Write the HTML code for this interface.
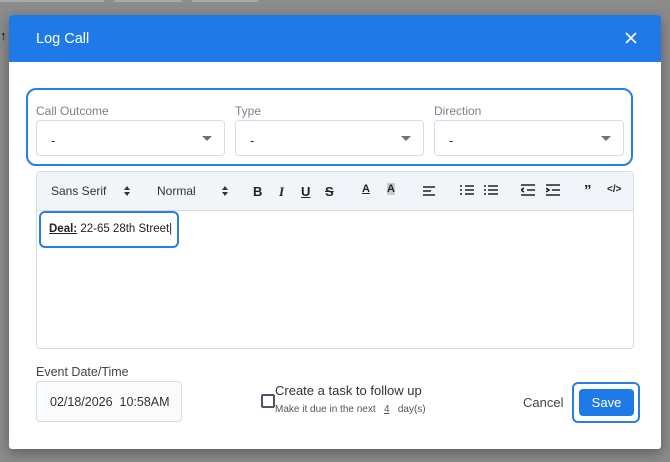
<!DOCTYPE html>
<html><head><style>
*{box-sizing:border-box;margin:0;padding:0}
body{width:670px;height:462px;background:#8c8c8c;font-family:"Liberation Sans",sans-serif;position:relative;overflow:hidden}
.a{position:absolute}
.modal{left:9px;top:15px;width:652px;height:434px;background:#fff;border-radius:3px;box-shadow:0 4px 14px rgba(0,0,0,.35)}
.hdr{left:9px;top:15px;width:652px;height:47px;background:#1f7ae8;border-radius:3px 3px 0 0;color:#fff;font-size:14.5px}
.lbl{font-size:12px;color:#7b8190}
.sel{height:36px;border:1px solid #d7dde6;border-radius:4px;background:#fff}
.sel span{position:absolute;left:14px;top:12px;font-size:13px;color:#333}
.sel i{position:absolute;right:12px;top:15px;border-left:5px solid transparent;border-right:5px solid transparent;border-top:5px solid #6b7280}
.tb{font-size:12px;color:#333}
.ic{font-size:13px;font-weight:bold;color:#222}
svg.s{position:absolute;stroke:#222;stroke-width:1.6;fill:none}
</style></head><body>
<div class="a" style="left:0;top:0;width:104px;height:2px;background:#aaa"></div>
<div class="a" style="left:114px;top:0;width:68px;height:2px;background:#aaa"></div>
<div class="a" style="left:192px;top:0;width:66px;height:2px;background:#aaa"></div>
<div class="a" style="left:0;top:28px;font-size:13px;color:#111">↑</div>
<div class="a modal"></div>
<div class="a hdr"><span class="a" style="left:27px;top:16px">Log Call</span>
<svg class="a" style="left:616px;top:17px" width="12" height="12" viewBox="0 0 12 12"><path d="M1 1L11 11M11 1L1 11" stroke="#fff" stroke-width="1.6"/></svg></div>
<div class="a" style="left:26px;top:88px;width:607px;height:78px;border:2px solid #2a7de6;border-radius:10px"></div>
<div class="a lbl" style="left:36px;top:104px">Call Outcome</div>
<div class="a lbl" style="left:235px;top:104px">Type</div>
<div class="a lbl" style="left:434px;top:104px">Direction</div>
<div class="a sel" style="left:36px;top:120px;width:189px"><span>-</span><i></i></div>
<div class="a sel" style="left:235px;top:120px;width:189px"><span>-</span><i></i></div>
<div class="a sel" style="left:434px;top:120px;width:190px"><span>-</span><i></i></div>
<div class="a" style="left:36px;top:171px;width:598px;height:178px;border:1px solid #d7dde6;border-radius:4px;background:#fff"></div>
<div class="a" style="left:37px;top:172px;width:596px;height:39px;background:#f1f4f8;border-bottom:1px solid #d7dde6;border-radius:4px 4px 0 0"></div>
<div class="a tb" style="left:51px;top:184px">Sans Serif</div>
<svg class="a" style="left:124px;top:186px" width="6" height="10"><path d="M0 4L3 0L6 4ZM0 6L3 10L6 6Z" fill="#333"/></svg>
<div class="a tb" style="left:157px;top:184px">Normal</div>
<svg class="a" style="left:222px;top:186px" width="6" height="10"><path d="M0 4L3 0L6 4ZM0 6L3 10L6 6Z" fill="#333"/></svg>
<div class="a ic" style="left:253px;top:184px">B</div>
<div class="a ic" style="left:279px;top:184px;font-style:italic;font-family:'Liberation Serif',serif">I</div>
<div class="a ic" style="left:301px;top:184px;text-decoration:underline">U</div>
<div class="a ic" style="left:325px;top:184px;text-decoration:line-through">S</div>
<div class="a ic" style="left:362px;top:183px;font-size:11px;text-decoration:underline">A</div>
<div class="a ic" style="left:387px;top:183px;font-size:11px;background:#ccc">A</div>
<svg class="s" style="left:423px;top:185px" width="14" height="12"><path d="M0 2H12M0 6H8M0 10H12"/></svg>
<svg class="s" style="left:460px;top:184px" width="14" height="12"><path d="M5 2H14M5 6H14M5 10H14M0 2H2M0 6H2M0 10H2"/></svg>
<svg class="s" style="left:484px;top:184px" width="14" height="12"><path d="M4 2H14M4 6H14M4 10H14M0 2H2M0 6H2M0 10H2"/></svg>
<svg class="s" style="left:521px;top:184px" width="14" height="12"><path d="M0 1H14M6 6H14M0 11H14M3 4L0 6L3 8"/></svg>
<svg class="s" style="left:546px;top:184px" width="14" height="12"><path d="M0 1H14M6 6H14M0 11H14M0 4L3 6L0 8"/></svg>
<div class="a ic" style="left:584px;top:182px;font-size:15px">”</div>
<div class="a ic" style="left:607px;top:184px;font-size:10px">&lt;/&gt;</div>
<div class="a" style="left:39px;top:211px;width:140px;height:37px;border:2px solid #2a7de6;border-radius:6px;background:#fff"></div>
<div class="a" style="left:49px;top:223px;font-size:11.5px;color:#222"><b style="text-decoration:underline">Deal:</b> 22-65 28th Street|</div>
<div class="a" style="left:36px;top:365px;font-size:12.5px;color:#444">Event Date/Time</div>
<div class="a" style="left:36px;top:381px;width:146px;height:41px;border:1px solid #d7dde6;border-radius:4px;background:#f9fbfd"></div>
<div class="a" style="left:50px;top:395px;font-size:12.5px;color:#333">02/18/2026&nbsp; 10:58AM</div>
<div class="a" style="left:261px;top:394px;width:14px;height:14px;border:2px solid #4a5568;border-radius:2px"></div>
<div class="a" style="left:275px;top:383px;font-size:13px;color:#333">Create a task to follow up</div>
<div class="a" style="left:275px;top:404px;font-size:10px;color:#555">Make it due in the next &nbsp; <u>4</u> &nbsp; day(s)</div>
<div class="a" style="left:523px;top:395px;font-size:13px;color:#444">Cancel</div>
<div class="a" style="left:572px;top:382px;width:68px;height:41px;border:2px solid #2a7de6;border-radius:6px"></div>
<div class="a" style="left:579px;top:389px;width:55px;height:27px;background:#1f7ae8;border-radius:4px;color:#fff;font-size:13px;text-align:center;line-height:27px">Save</div>
</body></html>
